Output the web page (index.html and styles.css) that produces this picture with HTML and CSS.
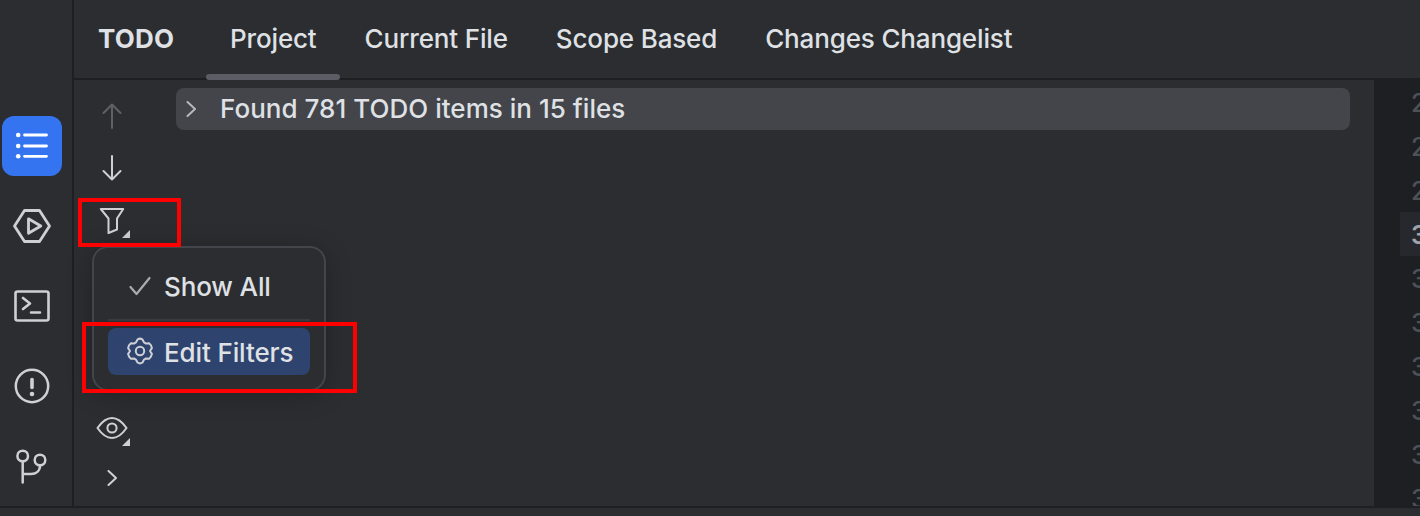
FILE: index.html
```html
<!DOCTYPE html>
<html lang="en">
<head>
<meta charset="utf-8">
<title>TODO</title>
<link rel="stylesheet" href="styles.css">
</head>
<body>
<div class="window">
  <div class="main">
    <nav class="stripe">
      <div class="stripe-btn active">
        <svg width="36" height="36" viewBox="0 0 36 36" fill="none" stroke="#fff" stroke-width="2.800" stroke-linecap="round"><path d="M10.500 7H32.500M10.500 18H32.500M10.500 28.300H32.500"/><g fill="#fff" stroke="none"><circle cx="4.200" cy="7" r="2.300"/><circle cx="4.200" cy="18" r="2.300"/><circle cx="4.200" cy="28.300" r="2.300"/></g></svg>
      </div>
      <div class="stripe-btn">
        <svg width="40" height="36" viewBox="0 0 40 36" fill="none" stroke="#ced0d6" stroke-width="2.800" stroke-linejoin="round"><path d="M12.500 2.500H27.500L37.500 18L27.500 33.500H12.500L2.500 18Z"/><path d="M16.500 10.800L28.800 18L16.500 25.200Z"/></svg>
      </div>
      <div class="stripe-btn">
        <svg width="36" height="32" viewBox="0 0 36 32" fill="none" stroke="#ced0d6" stroke-width="2.600" stroke-linecap="round" stroke-linejoin="round"><rect x="1.500" y="1.500" width="33" height="29" rx="2"/><path d="M9 8L16 13.500L9 19M17 22.500H26"/></svg>
      </div>
      <div class="stripe-btn">
        <svg width="36" height="36" viewBox="0 0 36 36" fill="none" stroke="#ced0d6" stroke-width="2.500" stroke-linecap="round"><circle cx="18" cy="18" r="16.200"/><path d="M18 11.500V19.500" stroke-width="3.600"/><circle cx="18" cy="26" r="2.300" fill="#ced0d6" stroke="none"/></svg>
      </div>
      <div class="stripe-btn">
        <svg width="32" height="36" viewBox="0 0 32 36" fill="none" stroke="#ced0d6" stroke-width="2.500" stroke-linecap="round"><circle cx="6.700" cy="8" r="5.300"/><circle cx="24" cy="12" r="5.300"/><path d="M6.700 13.500V34.500M6.700 26H15C20 26 24 23 24 17.500"/></svg>
      </div>
    </nav>
    <div class="panel">
      <header class="tabs">
        <span class="title">TODO</span>
        <span class="tab selected">Project</span>
        <span class="tab">Current File</span>
        <span class="tab">Scope Based</span>
        <span class="tab">Changes Changelist</span>
      </header>
      <div class="body">
        <div class="tools">
          <div class="tool">
            <svg width="20" height="26" viewBox="0 0 20 26" fill="none" stroke="#5f6167" stroke-width="2" stroke-linecap="round" stroke-linejoin="round"><path d="M10 1.500V25M1.500 10L10 1.500L18.500 10"/></svg>
          </div>
          <div class="tool">
            <svg width="20" height="26" viewBox="0 0 20 26" fill="none" stroke="#ced0d6" stroke-width="2" stroke-linecap="round" stroke-linejoin="round"><path d="M10 1V24.500M1.500 16L10 24.500L18.500 16"/></svg>
          </div>
          <div class="tool drop">
            <svg width="26" height="28" viewBox="0 0 26 28" fill="none" stroke="#ced0d6" stroke-width="2" stroke-linejoin="round"><path d="M1.800 3H24.200L18 12.500V23.500L9.500 27V12.500Z"/></svg>
            <i class="corner"></i>
          </div>
          <div class="spacer"></div>
          <div class="tool drop">
            <svg width="32" height="24" viewBox="0 0 32 24" fill="none" stroke="#ced0d6" stroke-width="2"><path d="M1.500 12C6 5.500 10.500 2 16 2S26 5.500 30.500 12C26 18.500 21.500 22 16 22S6 18.500 1.500 12Z"/><circle cx="16" cy="12" r="4.600"/></svg>
            <i class="corner"></i>
          </div>
          <div class="tool short">
            <svg width="10" height="16" viewBox="0 0 10 16" fill="none" stroke="#ced0d6" stroke-width="2" stroke-linecap="round" stroke-linejoin="round"><path d="M1.500 1L9 8L1.500 15"/></svg>
          </div>
        </div>
        <div class="content">
          <div class="tree-row">
            <svg width="10" height="16" viewBox="0 0 10 16" fill="none" stroke="#b4b8bf" stroke-width="2" stroke-linecap="round" stroke-linejoin="round"><path d="M1.500 1L9 8L1.500 15"/></svg>
            <span>Found 781 TODO items in 15 files</span>
          </div>
        </div>
      </div>
    </div>
    <div class="gutter">
      <div class="gutter-head"></div>
      <div class="gutter-lines">
        <div class="line">2</div>
        <div class="line">2</div>
        <div class="line">2</div>
        <div class="line current">3</div>
        <div class="line">3</div>
        <div class="line">3</div>
        <div class="line">3</div>
        <div class="line">3</div>
        <div class="line">3</div>
        <div class="line">3</div>
      </div>
    </div>
  </div>
  <div class="status"></div>
  <div class="menu">
    <div class="item check">
      <svg width="22" height="20" viewBox="0 0 22 20" fill="none" stroke="#a8abb2" stroke-width="2.200" stroke-linecap="round" stroke-linejoin="round"><path d="M1.500 11L7.500 18L20.500 2"/></svg>
      <span>Show All</span>
    </div>
    <div class="sep"></div>
    <div class="item hover">
      <svg width="28" height="28" viewBox="0 0 28 28" fill="none" stroke="#ced0d6" stroke-width="2" stroke-linejoin="round"><path d="M11.500 2.500C12.800 1.600 15.200 1.600 16.500 2.500L18 5.400C18.700 5.800 19.300 6.100 20 6.600L23.100 6.300C24.500 7.400 25.700 9.500 25.900 11.100L24.100 13.700V14.300L25.900 16.900C25.700 18.500 24.500 20.600 23.100 21.700L20 21.400C19.300 21.900 18.700 22.200 18 22.600L16.500 25.500C15.200 26.400 12.800 26.400 11.500 25.500L10 22.600C9.300 22.200 8.700 21.900 8 21.400L4.900 21.700C3.500 20.600 2.300 18.500 2.100 16.900L3.900 14.300V13.700L2.100 11.100C2.300 9.500 3.500 7.400 4.900 6.300L8 6.600C8.700 6.100 9.300 5.800 10 5.400Z"/><circle cx="14" cy="14" r="4.200"/></svg>
      <span>Edit Filters</span>
    </div>
  </div>
  <div class="mark mark-filter"></div>
  <div class="mark mark-edit"></div>
</div>
</body>
</html>
```
FILE: styles.css
```css
* { box-sizing: border-box; }
html, body { margin: 0; padding: 0; }
body { background: #2b2d30; font-family: Inter, "Liberation Sans", sans-serif; font-weight: 450; overflow: hidden; }
.window { position: relative; width: 1420px; height: 516px; display: flex; flex-direction: column; background: #2b2d30; overflow: hidden; }
.main { display: flex; height: 506px; }
.status { height: 10px; border-top: 2px solid #1e1f22; background: #2b2d30; }
.stripe { width: 74px; flex: none; border-right: 2px solid #1e1f22; padding: 116px 0 0 2px; display: flex; flex-direction: column; gap: 20px; }
.stripe-btn { width: 60px; height: 60px; border-radius: 12px; display: flex; align-items: center; justify-content: center; }
.stripe-btn.active { background: #3574f0; }
.panel { width: 1300px; flex: none; display: flex; flex-direction: column; }
.tabs { height: 80px; border-bottom: 2px solid #1e1f22; display: flex; padding-left: 24px; color: #dfe1e5; font-size: 26px; }
.title { font-weight: 700; width: 132px; line-height: 78px; letter-spacing: .2px; }
.tab { line-height: 78px; margin-right: 48px; position: relative; letter-spacing: -.15px; }
.tab.selected::after { content: ""; position: absolute; left: -24px; right: -23px; bottom: -2px; height: 6px; border-radius: 3px; background: #5a5d63; }
.body { flex: 1; display: flex; }
.tools { width: 76px; flex: none; display: flex; flex-direction: column; align-items: center; padding-top: 10px; }
.tool { width: 76px; height: 52px; display: flex; align-items: center; justify-content: center; position: relative; }
.tool.short { height: 48px; }
.spacer { height: 156px; }
.corner { position: absolute; left: 48px; top: 36px; width: 0; height: 0; border-left: 8px solid transparent; border-bottom: 8px solid #ced0d6; }
.content { flex: 1; padding: 8px 24px 0 26px; }
.tree-row { height: 42px; border-radius: 8px; background: #43454a; display: flex; align-items: center; padding-left: 10px; gap: 24px; color: #dfe1e5; font-size: 26px; letter-spacing: .03px; }
.tree-row span { padding-bottom: 2px; }
.gutter { flex: 1; background: #1e1f22; overflow: hidden; }
.gutter-head { height: 80px; background: #2b2d30; border-bottom: 2px solid #1e1f22; }
.gutter-lines { color: #4e5157; font-size: 25px; }
.line { height: 44px; line-height: 46px; padding-left: 37px; }
.line.current { margin-left: 26px; padding-left: 11px; background: #26282e; color: #a1a3ab; font-weight: 600; }
.menu { position: absolute; left: 92px; top: 246px; width: 234px; height: 145px; border: 2px solid #43454a; border-radius: 16px; background: #2b2d30; box-shadow: 0 4px 24px rgba(0,0,0,.25); padding: 14px; display: flex; flex-direction: column; color: #dfe1e5; font-size: 26px; letter-spacing: -.12px; }
.item { height: 48px; display: flex; align-items: center; gap: 13px; border-radius: 8px; }
.item span { padding-top: 2px; }
.item.check { padding-left: 21px; }
.item.hover { background: #2e436e; margin-top: 7px; padding-left: 18px; gap: 10px; }
.sep { height: 2px; background: #393b40; margin-top: 9px; }
.mark { position: absolute; border: 4px solid #fe0000; pointer-events: none; }
.mark-filter { left: 78px; top: 198px; width: 103px; height: 49px; }
.mark-edit { left: 82px; top: 322px; width: 275px; height: 71px; }
```
